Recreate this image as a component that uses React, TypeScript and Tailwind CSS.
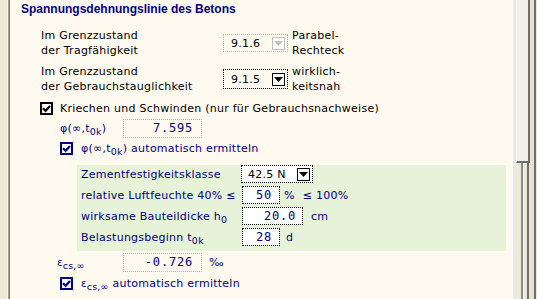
import React from "react";

const SANS = "font-['DejaVu_Sans',sans-serif]";
const MONO = "font-['DejaVu_Sans_Mono',monospace]";

function CheckBox({ navy }: { navy?: boolean }) {
  return (
    <div
      className={
        navy
          ? "w-[13px] h-[13px] border-2 border-[#000080] text-[#000080] bg-white flex items-center justify-center shrink-0"
          : "w-[13px] h-[13px] border-2 border-black text-black bg-white flex items-center justify-center shrink-0"
      }
    >
      <svg width="9" height="9" viewBox="0 0 9 9">
        <path d="M1 4.2 L3.6 6.8 L8 2" fill="none" stroke="currentColor" strokeWidth="2.2" />
      </svg>
    </div>
  );
}

function ArrowBtn({ disabled }: { disabled?: boolean }) {
  return (
    <div
      className={
        disabled
          ? "w-[13px] h-[13px] border border-[#c0c0c0] bg-white flex justify-center pt-[3px] shrink-0"
          : "w-[13px] h-[13px] border border-black bg-white flex justify-center pt-[3px] shrink-0"
      }
    >
      <svg width="9" height="5" viewBox="0 0 9 5">
        <path d="M0 0H9L4.5 5Z" fill={disabled ? "#c0c0c0" : "#000"} />
      </svg>
    </div>
  );
}

function Sub({ children }: { children: React.ReactNode }) {
  return <span className="text-[9.5px] relative top-[3px]">{children}</span>;
}

export default function App() {
  return (
    <div className={`w-[537px] h-[299px] flex overflow-hidden bg-[#ece9d8] ${SANS} text-[11px] leading-[15px] tracking-[0.25px]`}>
      {/* left frame */}
      <div className="w-[7px] bg-[#ece9d8]" />
      <div className="w-px bg-[#f6f4ec]" />
      <div className="w-px bg-[#a5a49c]" />
      <div className="w-px bg-[#74726a]" />

      {/* main content */}
      <div className="w-[502px] bg-[#fffaf0] flex flex-col pt-[2px]">
        <div className="pl-[11px] font-['Liberation_Sans',sans-serif] font-bold text-[12px] leading-[15px] tracking-normal text-[#000080]">
          Spannungsdehnungslinie des Betons
        </div>

        {/* Grenzzustand Tragfähigkeit */}
        <div className="mt-[11px] pl-[31px] flex items-center h-[30px] text-black">
          <div className="w-[182px]">
            <div>Im Grenzzustand</div>
            <div>der Tragfähigkeit</div>
          </div>
          <div className="w-[65px] h-[18px] border border-dotted border-[#b8b8b8] flex items-center justify-between pl-[7px] pr-[2px]">
            <span>9.1.6</span>
            <ArrowBtn disabled />
          </div>
          <div className="ml-[4px]">
            <div>Parabel-</div>
            <div>Rechteck</div>
          </div>
        </div>

        {/* Grenzzustand Gebrauchstauglichkeit */}
        <div className="mt-[6px] pl-[31px] flex items-center h-[30px] text-black">
          <div className="w-[182px]">
            <div>Im Grenzzustand</div>
            <div>der Gebrauchstauglichkeit</div>
          </div>
          <div className="w-[65px] h-[20px] border border-dotted border-black flex items-center justify-between pl-[7px] pr-[2px]">
            <span>9.1.5</span>
            <ArrowBtn />
          </div>
          <div className="ml-[4px]">
            <div>wirklich-</div>
            <div>keitsnah</div>
          </div>
        </div>

        {/* Kriechen und Schwinden */}
        <div className="mt-[7px] pl-[30px] flex items-center h-[15px] text-black">
          <CheckBox />
          <span className="ml-[7px]">Kriechen und Schwinden (nur für Gebrauchsnachweise)</span>
        </div>

        {/* phi row */}
        <div className="mt-[3px] pl-[50px] flex items-center h-[19px] text-[#000080]">
          <span className="w-[63px]">
            φ(∞,t<Sub>0k</Sub>)
          </span>
          <div className={`w-[79px] h-[19px] border border-dotted border-[#b8b8b8] flex items-center justify-end pr-[8px] ${MONO} text-[12px] tracking-[0.8px]`}>
            7.595
          </div>
        </div>

        {/* phi auto */}
        <div className="mt-[3px] pl-[50px] flex items-center h-[15px] text-[#000080]">
          <CheckBox navy />
          <span className="ml-[8px]">
            φ(∞,t<Sub>0k</Sub>) automatisch ermitteln
          </span>
        </div>

        {/* green box */}
        <div className="mt-[9px] ml-[67px] mr-[6px] bg-[#e7f3d9] pl-[4px] pb-[5px] flex flex-col gap-[3px] text-[#000080]">
          <div className="flex items-center h-[18px]">
            <span className="w-[160px]">Zementfestigkeitsklasse</span>
            <div className="w-[72px] h-[18px] border border-dotted border-black bg-white flex items-center justify-between pl-[6px] pr-[2px] text-black">
              <span>42.5 N</span>
              <ArrowBtn />
            </div>
          </div>
          <div className="flex items-center h-[18px]">
            <span className="w-[161px]">relative Luftfeuchte 40% ≤</span>
            <div className={`w-[38px] h-[18px] border border-dotted border-black bg-white flex items-center justify-end pr-[7px] ${MONO} text-[12px] tracking-[0.8px]`}>
              50
            </div>
            <span className="ml-[4px]">%</span>
            <span className="ml-[8px]">≤ 100%</span>
          </div>
          <div className="flex items-center h-[18px]">
            <span className="w-[161px]">
              wirksame Bauteildicke h<Sub>0</Sub>
            </span>
            <div className={`w-[61px] h-[18px] border border-dotted border-black bg-white flex items-center justify-end pr-[6px] ${MONO} text-[12px] tracking-[0.8px]`}>
              20.0
            </div>
            <span className="ml-[8px]">cm</span>
          </div>
          <div className="flex items-center h-[18px]">
            <span className="w-[161px]">
              Belastungsbeginn t<Sub>0k</Sub>
            </span>
            <div className={`w-[38px] h-[18px] border border-dotted border-black bg-white flex items-center justify-end pr-[7px] ${MONO} text-[12px] tracking-[0.8px]`}>
              28
            </div>
            <span className="ml-[6px]">d</span>
          </div>
        </div>

        {/* epsilon row */}
        <div className="mt-[2px] pl-[47px] flex items-center h-[19px] text-[#000080]">
          <span className="w-[66px]">
            <span className="text-[10px]">ε</span>
            <Sub>cs,∞</Sub>
          </span>
          <div className={`w-[79px] h-[19px] border border-dotted border-[#b8b8b8] flex items-center justify-end pr-[8px] ${MONO} text-[12px] tracking-[0.8px]`}>
            -0.726
          </div>
          <span className="ml-[7px]">‰</span>
        </div>

        {/* eps auto */}
        <div className="mt-[4px] pl-[50px] flex items-center h-[15px] text-[#000080]">
          <CheckBox navy />
          <span className="ml-[8px]">
            <span className="text-[10px]">ε</span>
            <Sub>cs,∞</Sub> automatisch ermitteln
          </span>
        </div>
      </div>

      {/* right frame + scrollbar */}
      <div className="w-px bg-white" />
      <div className="w-[3px] bg-[#ece9d8]" />
      <div className="w-[14px] flex flex-col">
        <div className="h-[163px] bg-[#f0f0ea] border-r-2 border-b-2 border-[#6e6e6e] border-l border-l-white" />
        <div className="flex-1 flex">
          <div className="w-[5px] bg-[#ece9d8]" />
          <div className="w-[2px] bg-[#8c8c8c]" />
          <div className="w-px bg-[#f7f6f0]" />
          <div className="w-[3px] bg-[#ece9d8]" />
          <div className="w-[2px] bg-[#6e6e6e]" />
          <div className="w-px bg-[#ece9d8]" />
        </div>
      </div>
      <div className="w-[4px] bg-[#e6e2d2]" />
      <div className="w-[2px] bg-[#6e6e6e]" />
      <div className="w-px bg-[#ece9d8]" />
    </div>
  );
}
